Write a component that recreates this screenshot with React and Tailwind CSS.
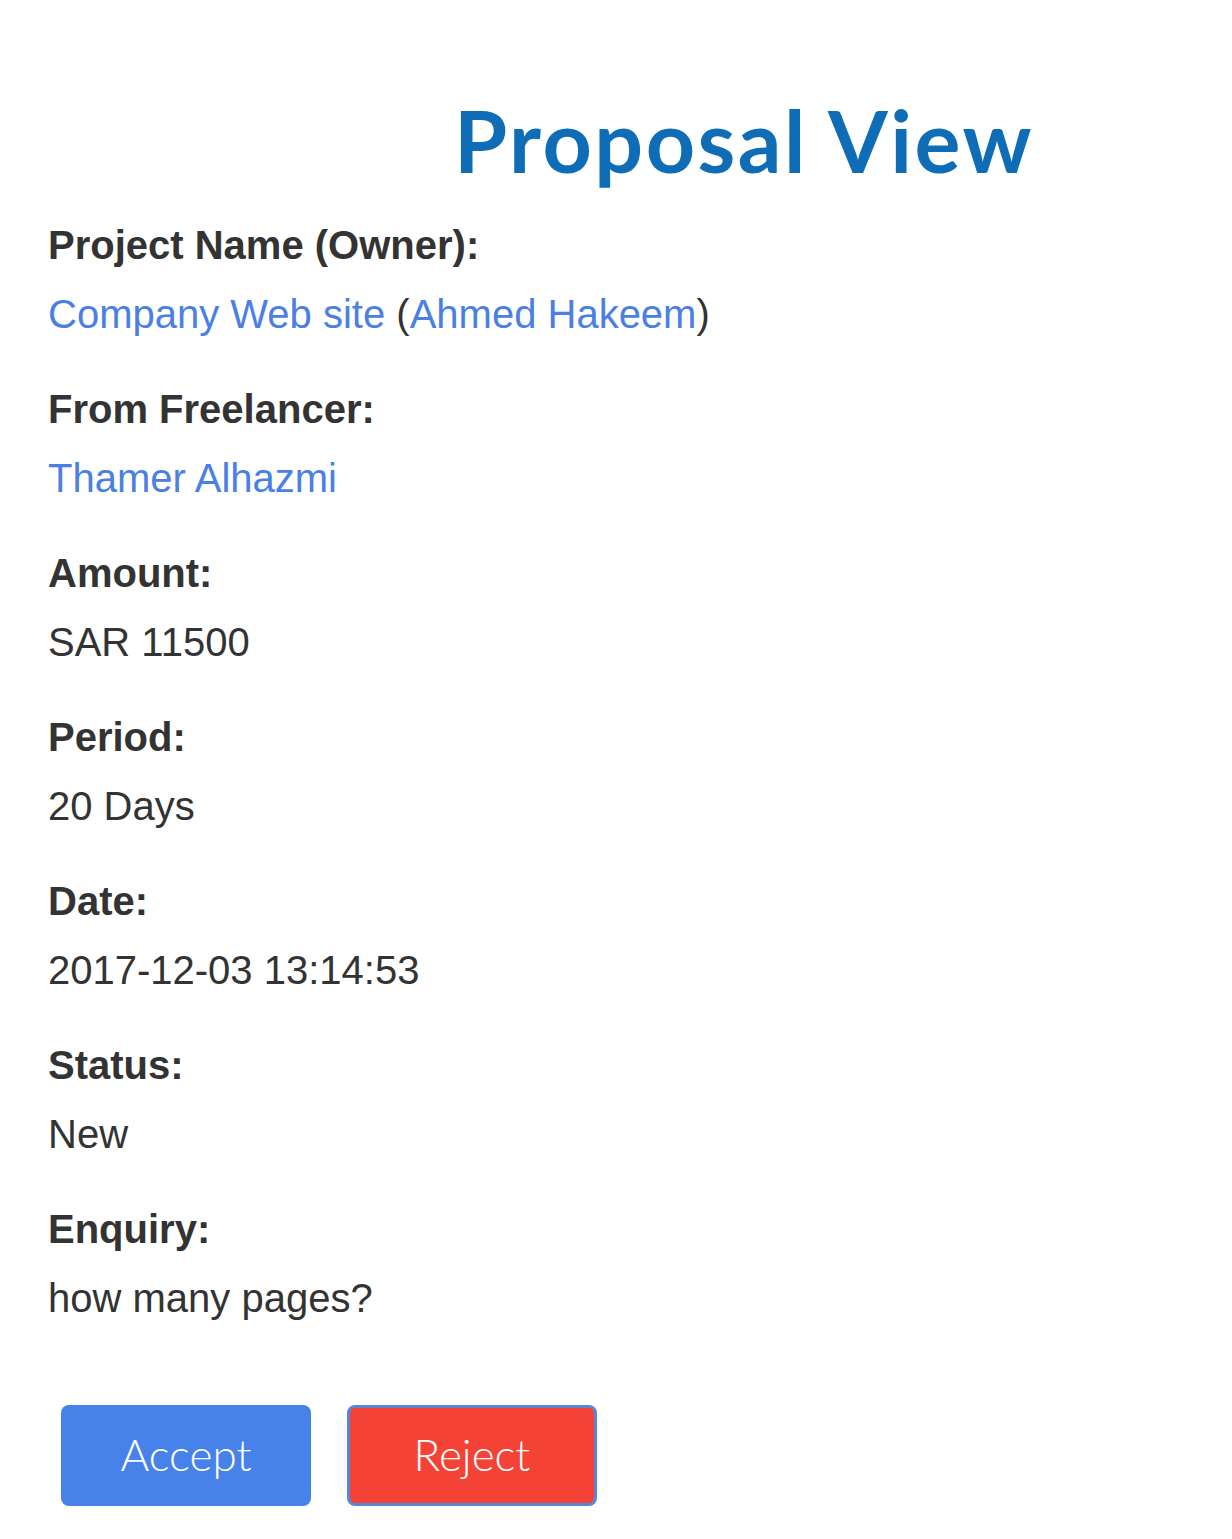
export default function App() {
  const rows = [
    { label: "Amount:", value: "SAR 11500" },
    { label: "Period:", value: "20 Days" },
    { label: "Date:", value: "2017-12-03 13:14:53" },
    { label: "Status:", value: "New" },
    { label: "Enquiry:", value: "how many pages?" },
  ];

  return (
    <div className="min-h-[1539px] bg-white font-['Liberation_Sans',Arial,sans-serif] text-[#333333]">
      <div className="pl-[454px] pt-[90px]">
        <h1 className="font-['Lato',sans-serif] text-[86px] font-bold leading-[100px] tracking-[2.5px] text-[#0e6db6]">
          Proposal View
        </h1>
      </div>

      <div className="px-[48px] pt-[27px]">
        <div className="mb-[39px]">
          <h3 className="text-[40px] font-bold leading-[56px]">
            Project Name (Owner):
          </h3>
          <p className="mt-[13px] text-[40px] leading-[56px]">
            <a href="#" className="text-[#4a80e6]">
              Company Web site
            </a>{" "}
            (
            <a href="#" className="text-[#4a80e6]">
              Ahmed Hakeem
            </a>
            )
          </p>
        </div>

        <div className="mb-[39px]">
          <h3 className="text-[40px] font-bold leading-[56px]">
            From Freelancer:
          </h3>
          <p className="mt-[13px] text-[40px] leading-[56px]">
            <a href="#" className="text-[#4a80e6]">
              Thamer Alhazmi
            </a>
          </p>
        </div>

        {rows.map((row) => (
          <div key={row.label} className="mb-[39px]">
            <h3 className="text-[40px] font-bold leading-[56px]">
              {row.label}
            </h3>
            <p className="mt-[13px] text-[40px] leading-[56px]">{row.value}</p>
          </div>
        ))}
      </div>

      <div className="flex gap-[36px] pl-[61px] pt-[40px]">
        <button className="h-[101px] w-[250px] rounded-[8px] bg-[#4682e9] pb-[3px] font-['Lato',sans-serif] text-[44px] font-light text-white">
          Accept
        </button>
        <button className="h-[101px] w-[250px] rounded-[8px] border-[3px] border-[#5a86d8] bg-[#f44336] pb-[3px] font-['Lato',sans-serif] text-[44px] font-light text-white">
          Reject
        </button>
      </div>
    </div>
  );
}
